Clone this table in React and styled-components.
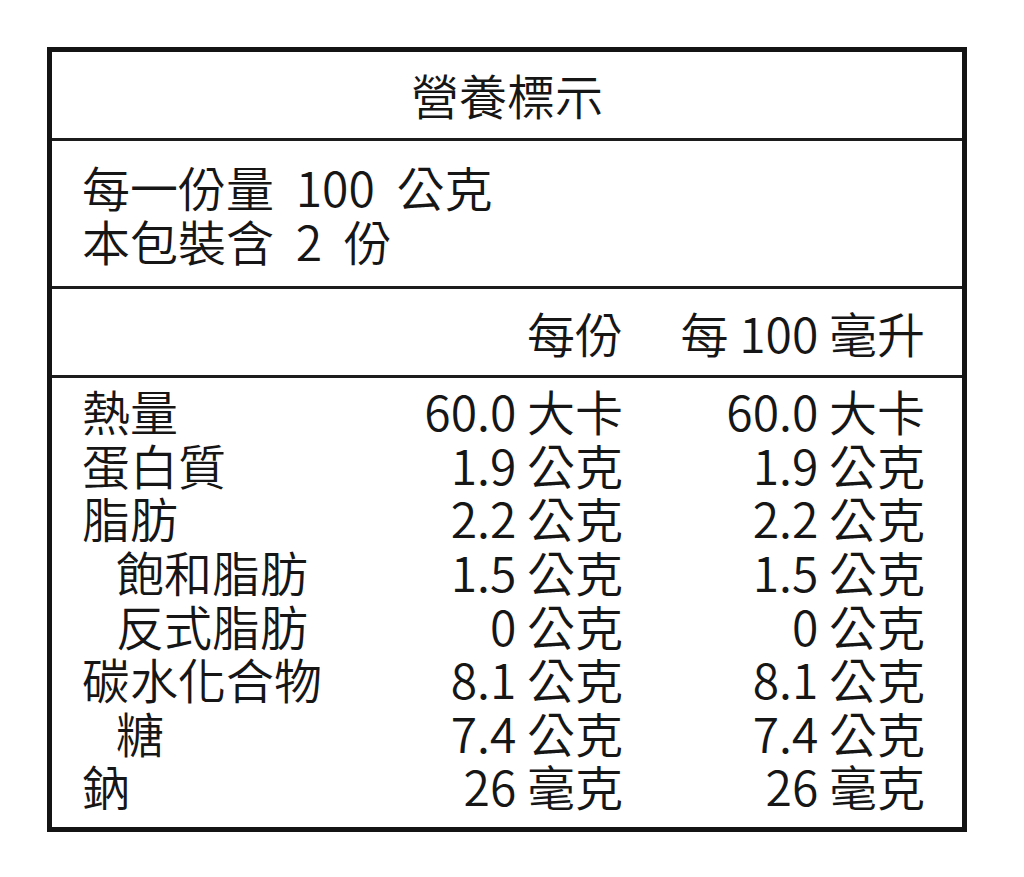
import React from "react";
import styled, { createGlobalStyle } from "styled-components";

const GlobalStyle = createGlobalStyle`
  html, body {
    margin: 0;
    padding: 0;
    background: #ffffff;
  }
  body {
    font-family: "Noto Sans CJK TC", "Noto Sans", sans-serif;
    font-weight: 350;
    color: #161616;
  }
`;

const Page = styled.div`
  padding: 47px 0 0 47px;
`;

const Label = styled.div`
  width: 920px;
  box-sizing: border-box;
  border: 5px solid #141414;
  display: flex;
  flex-direction: column;
  font-size: 48px;
  line-height: 53.6px;
`;

const Section = styled.div`
  box-sizing: border-box;
  border-bottom: ${(p) => (p.last ? "none" : "3px solid #1c1c1c")};
`;

const TitleSection = styled(Section)`
  height: 89px;
  display: flex;
  align-items: center;
  justify-content: center;
`;

const ServingSection = styled(Section)`
  padding: 19px 30px;
  display: flex;
  flex-direction: column;
  word-spacing: 11px;
`;

const Grid = styled.div`
  display: grid;
  grid-template-columns: 1fr 240px 302px;
  padding: 0 37px 0 30px;
`;

const HeaderGrid = styled(Grid)`
  height: 84px;
  align-items: center;
  padding-top: 2px;
`;

const NutrientGrid = styled(Grid)`
  padding-top: 6px;
  padding-bottom: 14px;
`;

const Name = styled.div`
  padding-left: ${(p) => (p.indent ? "34px" : "0")};
  white-space: nowrap;
`;

const Value = styled.div`
  text-align: right;
  white-space: nowrap;
`;

const rows = [
  { name: "熱量", serving: "60.0 大卡", per100: "60.0 大卡" },
  { name: "蛋白質", serving: "1.9 公克", per100: "1.9 公克" },
  { name: "脂肪", serving: "2.2 公克", per100: "2.2 公克" },
  { name: "飽和脂肪", serving: "1.5 公克", per100: "1.5 公克", indent: true },
  { name: "反式脂肪", serving: "0 公克", per100: "0 公克", indent: true },
  { name: "碳水化合物", serving: "8.1 公克", per100: "8.1 公克" },
  { name: "糖", serving: "7.4 公克", per100: "7.4 公克", indent: true },
  { name: "鈉", serving: "26 毫克", per100: "26 毫克" },
];

export default function App() {
  return (
    <>
      <GlobalStyle />
      <Page>
        <Label>
          <TitleSection>營養標示</TitleSection>
          <ServingSection>
            <div>每一份量 100 公克</div>
            <div>本包裝含 2 份</div>
          </ServingSection>
          <Section>
            <HeaderGrid>
              <div />
              <Value>每份</Value>
              <Value>每 100 毫升</Value>
            </HeaderGrid>
          </Section>
          <Section last>
            <NutrientGrid>
              {rows.map((r) => (
                <React.Fragment key={r.name}>
                  <Name indent={r.indent}>{r.name}</Name>
                  <Value>{r.serving}</Value>
                  <Value>{r.per100}</Value>
                </React.Fragment>
              ))}
            </NutrientGrid>
          </Section>
        </Label>
      </Page>
    </>
  );
}
